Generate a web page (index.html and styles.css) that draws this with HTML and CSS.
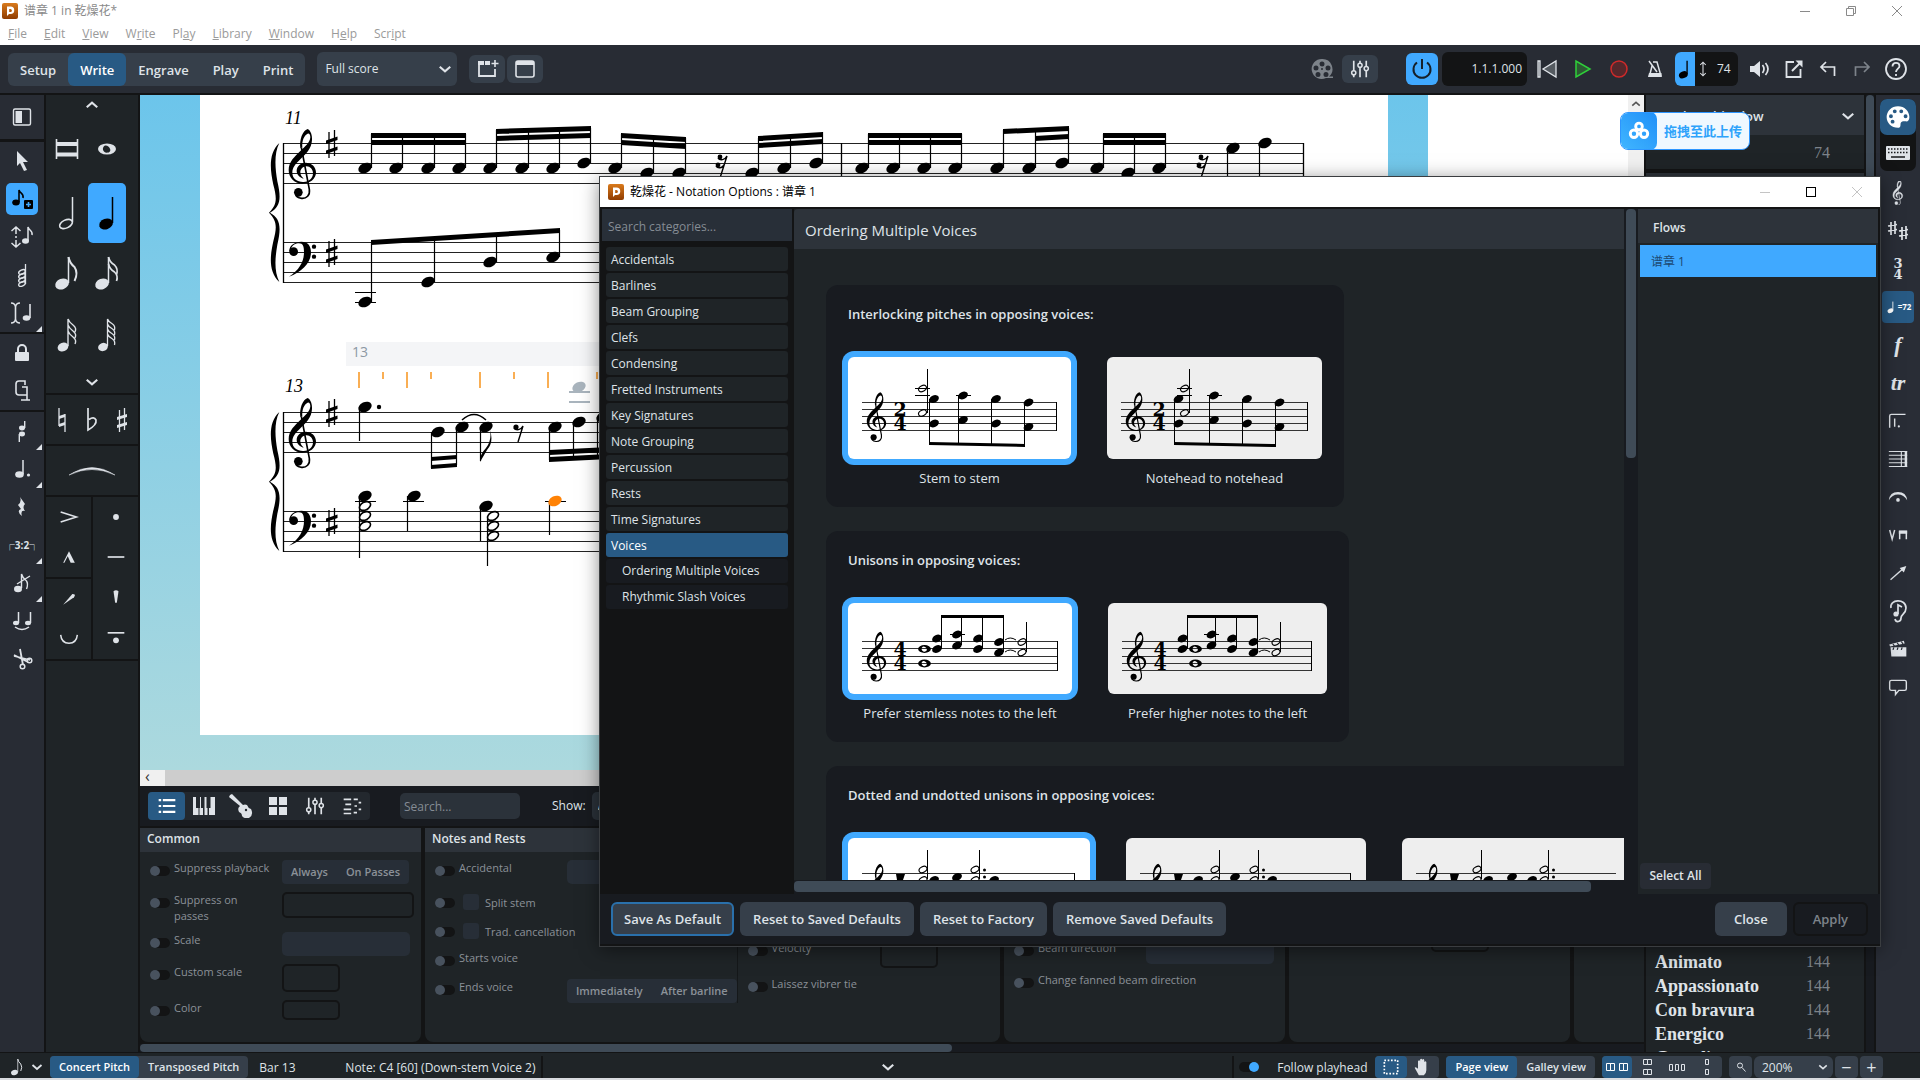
FILE: index.html
```html
<!DOCTYPE html>
<html lang="en">
<head>
    <meta charset="UTF-8">
    <meta name="viewport" content="width=device-width, initial-scale=1.0">
    <title>谱章 1 in 乾燥花*</title>
    <link rel="stylesheet" href="styles.css">
</head>
<body>
    <svg class="sprite" aria-hidden="true">
        <defs>
            <linearGradient id="orange" x1="0" y1="0" x2="0" y2="1"><stop offset="0" stop-color="#d97a1c"/><stop offset="1" stop-color="#8f3c00"/></linearGradient>
            <!-- notation glyphs, staff space = 10 -->
            <g id="head"><ellipse rx="7" ry="4.9" transform="rotate(-25)"/></g>
            <g id="open"><ellipse rx="5.9" ry="3.9" transform="rotate(-28)" fill="none" stroke="currentColor" stroke-width="1.6"/></g>
            <g id="whole"><path fill-rule="evenodd" d="M-9 0a9 5.5 0 0 1 18 0a9 5.5 0 0 1-18 0zM-3.5-2c-1.500 2 0 5.500 3 5.700c3 .2 4.500-1.500 3.500-3.900c-1-3-5-4.500-6.500-1.800z"/></g>
            <g id="sharp"><path d="M3 1v26M8.500-1v26" stroke="currentColor" stroke-width="1.300"/><path d="M0 9.500l11.500-4v3.500l-11.500 4zM0 19.500l11.500-4v3.500l-11.500 4z"/></g>
            <g id="gclef">
                <g transform="scale(.3333) translate(-118 -249)">
                    <path d="M174 117C184 122 188 138 187 150C186 176 168 192 152 208C138 222 128 232 128 248C128 266 142 275 160 276C178 277 190 264 190 250C190 238 181 229 171 229C160 229 152 237 152 247C152 256 157 261 162 266C150 263 141 254 141 243C141 229 152 218 168 218C186 218 199 231 199 247C199 267 181 281 158 281C133 281 117 262 117 240C117 215 136 199 152 183C166 170 181 158 182 142C182 134 179 130 174 131C164 135 156 152 158 172L152 174C149 150 158 122 174 117Z"/>
                    <path d="M155 172L179 298C182 316 170 326 156 325C148 325 142 321 138 316" fill="none" stroke="currentColor" stroke-width="5"/>
                    <circle cx="146" cy="307" r="13"/>
                </g>
            </g>
            <g id="fclef">
                <g transform="scale(.3333) translate(-118 -487)">
                    <path d="M119 486C117 468 135 456 155 456C176 456 184 470 184 488C184 520 155 548 118 561C150 540 163 515 163 487C163 470 160 461 148 461C138 461 128 466 124 478Z"/>
                    <circle cx="132" cy="486" r="13"/><circle cx="193" cy="471" r="6.500"/><circle cx="193" cy="501" r="6.500"/>
                </g>
            </g>
            <g id="brace"><path transform="scale(.3333) translate(-57 -160)" d="M88 160C55 190 60 240 70 285C82 330 80 345 57 369C80 393 82 410 70 455C60 500 55 545 88 577C72 545 75 505 82 465C95 410 90 385 60 369C90 352 95 330 82 275C75 235 72 190 88 160Z"/></g>
            <g id="rest8"><circle cx="-3" cy="-5" r="2.600"/><path d="M-5-4c2 3 7 2 9-2l-5 16" fill="none" stroke="currentColor" stroke-width="1.400"/></g>
            <g id="rest16"><circle cx="-2" cy="-5" r="2.400"/><circle cx="-4" cy="3" r="2.400"/><path d="M-4-4c2 3 7 2 9-2l-7 22M-6 4c2 3 6 2 8-1" fill="none" stroke="currentColor" stroke-width="1.400"/></g>
            <g id="sclef"><use href="#gclef" transform="scale(.71)"/></g>
            <g id="shead"><use href="#head" transform="scale(.73)"/></g>
            <g id="sopen"><use href="#open" transform="scale(.71)"/></g>
            <g id="swhole"><use href="#whole" transform="scale(.71)"/></g>
        </defs>
        <symbol id="i-logo" viewBox="0 0 16 16"><rect width="16" height="16" rx="2" fill="url(#orange)"/><path d="M5 3.500h3.500a3.700 3.700 0 0 1 0 7.500H7l-2 2zM7.200 6v3h1.200a1.400 1.400 0 0 0 0-3z" fill="#fff" fill-rule="evenodd"/></symbol>
        <symbol id="i-down" viewBox="0 0 12 12"><path d="M1.500 4L6 8l4.500-4" fill="none" stroke="currentColor" stroke-width="1.800"/></symbol>
        <symbol id="i-up" viewBox="0 0 12 12"><path d="M1.500 8L6 4l4.500 4" fill="none" stroke="currentColor" stroke-width="1.800"/></symbol>
        <symbol id="i-newtab" viewBox="0 0 24 24"><path d="M4 6v13h16v-7" fill="none" stroke="currentColor" stroke-width="1.800"/><path d="M3 4h6v4H3zM10 4h5v4h-5z"/><path d="M20 3v7M16.500 6.500h7" stroke="currentColor" stroke-width="1.600"/></symbol>
        <symbol id="i-window" viewBox="0 0 24 24"><rect x="3" y="4" width="18" height="16" rx="2" fill="none" stroke="currentColor" stroke-width="1.600"/><path d="M3 4h18v4H3z"/></symbol>
        <symbol id="i-reel" viewBox="0 0 24 24"><path fill-rule="evenodd" d="M12 2a10 10 0 1 0 4 19h7v-1.500h-4A10 10 0 0 0 12 2zm0 2.500a2.500 2.500 0 1 1 0 5a2.500 2.500 0 0 1 0-5zm-6 4a2.500 2.500 0 1 1 0 5a2.500 2.500 0 0 1 0-5zm12 0a2.500 2.500 0 1 1 0 5a2.500 2.500 0 0 1 0-5zm-6 2.500a1 1 0 1 1 0 2a1 1 0 0 1 0-2zm-4 4a2.500 2.500 0 1 1 0 5a2.500 2.500 0 0 1 0-5zm8 0a2.500 2.500 0 1 1 0 5a2.500 2.500 0 0 1 0-5z"/></symbol>
        <symbol id="i-mixer" viewBox="0 0 24 24"><path d="M4.500 2v12M4.500 19v3M12 2v3M12 10v12M19.500 2v7M19.500 14v8" stroke="currentColor" stroke-width="2"/><g fill="none" stroke="currentColor" stroke-width="1.800"><circle cx="4.500" cy="16.500" r="2.500"/><circle cx="12" cy="7.500" r="2.500"/><circle cx="19.500" cy="11.500" r="2.500"/></g></symbol>
        <symbol id="i-power" viewBox="0 0 24 24"><path d="M7 5.500a8.500 8.500 0 1 0 10 0M12 2v10" fill="none" stroke="currentColor" stroke-width="2"/></symbol>
        <symbol id="i-rewind" viewBox="0 0 24 24"><path d="M3 4h2v16H3zM21 4v16L8 12z" fill="#555b61" stroke="currentColor" stroke-width="1.300"/></symbol>
        <symbol id="i-play" viewBox="0 0 24 24"><path d="M5 4v16l14-8z" fill="#2d5a33" stroke="#2fd03a" stroke-width="1.500"/></symbol>
        <symbol id="i-rec" viewBox="0 0 24 24"><circle cx="12" cy="12" r="8" fill="#55282c" stroke="#d02a2a" stroke-width="1.500"/></symbol>
        <symbol id="i-metro" viewBox="0 0 24 24"><path d="M10 5h4l4 14H6.500L9 9M6 4l8 11" fill="none" stroke="currentColor" stroke-width="1.500"/><path d="M6 16h12.500v4H5z"/></symbol>
        <symbol id="i-tempo" viewBox="0 0 24 34"><ellipse cx="10" cy="24" rx="5.500" ry="4" transform="rotate(-25 10 24)"/><path d="M14.500 7v16" stroke="currentColor" stroke-width="1.600"/></symbol>
        <symbol id="i-updown" viewBox="0 0 10 20"><path d="M5 2v16M1.500 5L5 1.500 8.500 5M1.500 15L5 18.500 8.500 15" fill="none" stroke="currentColor" stroke-width="1.300"/></symbol>
        <symbol id="i-speaker" viewBox="0 0 24 24"><path d="M2 9h4l6-5v16l-6-5H2z"/><path d="M14.500 8q3 4 0 8M17.500 6q5 6 0 12" fill="none" stroke="currentColor" stroke-width="1.700"/></symbol>
        <symbol id="i-popout" viewBox="0 0 24 24"><path d="M12 5H4.500v15h14v-8" fill="none" stroke="currentColor" stroke-width="1.800"/><path d="M10 14l8-8" stroke="currentColor" stroke-width="2"/><path d="M13.500 3.500h7v7z"/></symbol>
        <symbol id="i-undo" viewBox="0 0 24 24"><path d="M10 5L5 10l5 5M5 10h13.500v9" fill="none" stroke="currentColor" stroke-width="1.700"/></symbol>
        <symbol id="i-redo" viewBox="0 0 24 24"><path d="M14 5l5 5-5 5M19 10H5.500v9" fill="none" stroke="currentColor" stroke-width="1.700"/></symbol>
        <symbol id="i-help" viewBox="0 0 24 24"><circle cx="12" cy="12" r="10" fill="none" stroke="currentColor" stroke-width="1.800"/><path d="M8.500 9.500c0-5 7-4.500 7-.5c0 2.500-3.500 3-3.500 6M12 17v2" fill="none" stroke="currentColor" stroke-width="1.800"/></symbol>
        <symbol id="i-panel" viewBox="0 0 24 24"><rect x="3.500" y="4" width="17" height="16" rx="1.500" fill="none" stroke="currentColor" stroke-width="1.400"/><path d="M5.500 6H12v12H5.500z"/></symbol>
        <symbol id="i-arrow" viewBox="0 0 24 24"><path d="M7 2v15l3-3 4 8 3-1-4-8h5z"/></symbol>
        <symbol id="i-noteadd" viewBox="0 0 24 24"><ellipse cx="6" cy="15.500" rx="3.800" ry="3"/><path d="M9 15V3c1 4 5 3 4 8" fill="none" stroke="currentColor" stroke-width="1.600"/><rect x="14" y="13" width="9" height="9" rx="1"/><path d="M18.500 15v5M16 17.500h5" stroke="#40a9ff" stroke-width="1.600"/></symbol>
        <symbol id="i-notemove" viewBox="0 0 24 24"><path d="M6 2v7M6 15v7M6 11v2M1.500 6L6 2l4.500 4M1.500 18L6 22l4.500-4M18 16V2c1 4 5 3 4 8" fill="none" stroke="currentColor" stroke-width="1.500"/><ellipse cx="15.500" cy="16" rx="3.500" ry="2.700"/></symbol>
        <symbol id="i-cluster" viewBox="0 0 24 24"><path d="M15.500 1v20" stroke="currentColor" stroke-width="1.300"/><g fill="none" stroke="currentColor" stroke-width="1.400"><ellipse cx="12" cy="9" rx="3.500" ry="2" transform="rotate(-25 12 9)"/><ellipse cx="12" cy="13" rx="3.500" ry="2" transform="rotate(-25 12 13)"/><ellipse cx="12" cy="17" rx="3.500" ry="2" transform="rotate(-25 12 17)"/><ellipse cx="12" cy="21" rx="3.500" ry="2" transform="rotate(-25 12 21)"/></g></symbol>
        <symbol id="i-caret" viewBox="0 0 24 24"><path d="M1 2q4 0 4.500 4v12q-.5 4-4.500 4M10 2q-4 0-4.500 4v12q.5 4 4.500 4M20 17V3" fill="none" stroke="currentColor" stroke-width="1.600"/><ellipse cx="16.500" cy="17" rx="3.800" ry="2.800"/></symbol>
        <symbol id="i-lock" viewBox="0 0 24 24"><rect x="5" y="11" width="14" height="9" rx="1"/><path d="M8 12V8a4 4 0 0 1 8 0v4" fill="none" stroke="currentColor" stroke-width="2"/></symbol>
        <symbol id="i-force" viewBox="0 0 24 24"><path d="M15 6V2H9q-3 0-3 3v8q0 3 3 3h8M12 8h5v13M11 21h9" fill="none" stroke="currentColor" stroke-width="1.600"/></symbol>
        <symbol id="i-voices" viewBox="0 0 24 24"><ellipse cx="12" cy="9" rx="3" ry="2.400"/><ellipse cx="12" cy="15" rx="3" ry="2.400"/><path d="M14.700 9V2M9.300 15v8" stroke="currentColor" stroke-width="1.400"/></symbol>
        <symbol id="i-dotted" viewBox="0 0 24 24"><ellipse cx="9.500" cy="17.500" rx="4.300" ry="3.200"/><path d="M13 17V3" stroke="currentColor" stroke-width="1.500"/><circle cx="18.500" cy="18" r="1.600"/></symbol>
        <symbol id="i-rest" viewBox="0 0 24 24"><path d="M10 2l5 7q-3 3 0 7q-5-1-3 5q-6-5-1-7L8 10q4-3 2-8z"/></symbol>
        <symbol id="i-grace" viewBox="0 0 24 24"><ellipse cx="8" cy="18" rx="4" ry="3.200"/><path d="M11.500 17V3q1 4 5 7q2 3 0 8M7 13L20 5" fill="none" stroke="currentColor" stroke-width="1.400"/></symbol>
        <symbol id="i-tie" viewBox="0 0 24 24"><ellipse cx="6" cy="14" rx="3" ry="2.200"/><ellipse cx="18" cy="14" rx="3" ry="2.200"/><path d="M8.500 14V3M20.500 14V3M5 18q7 5 14 0" fill="none" stroke="currentColor" stroke-width="1.500"/></symbol>
        <symbol id="i-cut" viewBox="0 0 24 24"><path d="M4 8l14 7M10 2l3 16M4 9l16 4" stroke="currentColor" stroke-width="1.800"/><circle cx="19.500" cy="13.500" r="2.300" fill="none" stroke="currentColor" stroke-width="1.500"/><circle cx="12.500" cy="19.500" r="2.300" fill="none" stroke="currentColor" stroke-width="1.500"/></symbol>
        <symbol id="i-breve" viewBox="0 0 24 24"><path d="M1.500 2v20M22.500 2v20" stroke="currentColor" stroke-width="1.600"/><path d="M2 5h20v4H2zM2 15.500h20v4H2z"/></symbol>
        <symbol id="i-whole" viewBox="0 0 24 24"><use href="#whole" x="12" y="12"/></symbol>
        <symbol id="n-half" viewBox="0 0 30 40"><ellipse cx="14" cy="31" rx="6.800" ry="4" transform="rotate(-25 14 31)" fill="none" stroke="currentColor" stroke-width="1.600"/><path d="M20.500 29V4" stroke="currentColor" stroke-width="1.500"/></symbol>
        <symbol id="n-quarter" viewBox="0 0 30 40"><ellipse cx="14" cy="31" rx="7" ry="5.200" transform="rotate(-20 14 31)"/><path d="M20.500 30V4" stroke="currentColor" stroke-width="1.500"/></symbol>
        <symbol id="n-8" viewBox="0 0 30 40"><use href="#n-quarter" x="-4" width="30" height="40"/><path d="M16.500 4q1 6 6 10q4 6 0 14" fill="none" stroke="currentColor" stroke-width="2"/></symbol>
        <symbol id="n-16" viewBox="0 0 30 40"><use href="#n-quarter" x="-4" width="30" height="40"/><path d="M16.500 4q1 5 6 8q4 4 2 10M16.500 11q1 5 6 8q4 4 2 9" fill="none" stroke="currentColor" stroke-width="1.700"/></symbol>
        <symbol id="n-32" viewBox="0 0 30 40"><ellipse cx="11" cy="32" rx="5.500" ry="4.300" transform="rotate(-20 11 32)"/><path d="M16 31V4q1 3 5 6q4 3 2 7M16 10q1 3 5 6q4 3 2 7M16 16q1 3 5 6q4 3 2 7" fill="none" stroke="currentColor" stroke-width="1.400"/></symbol>
        <symbol id="n-64" viewBox="0 0 30 40"><ellipse cx="11" cy="32" rx="5" ry="4" transform="rotate(-20 11 32)"/><path d="M15.500 31V4q1 3 5 5q3 2 2 6M15.500 9q1 3 5 5q3 2 2 6M15.500 14q1 3 5 5q3 2 2 6M15.500 19q1 3 5 5q3 2 2 6" fill="none" stroke="currentColor" stroke-width="1.300"/></symbol>
        <symbol id="i-natural" viewBox="0 0 24 24"><path d="M9 0v18M15 6v18" stroke="currentColor" stroke-width="1.300"/><path d="M9 8l6-2v3l-6 2zM9 16l6-2v3l-6 2z"/></symbol>
        <symbol id="i-flat" viewBox="0 0 24 24"><path d="M8 0v22q9-5 8-10q-2-4-7-.5" fill="none" stroke="currentColor" stroke-width="1.700"/></symbol>
        <symbol id="i-sharp" viewBox="0 0 24 24"><path d="M9.500 2v22M14.500 0v22" stroke="currentColor" stroke-width="1.300"/><path d="M7 9l10-3v3L7 12zM7 17l10-3v3L7 20z"/></symbol>
        <symbol id="i-slur" viewBox="0 0 48 12"><path d="M1 10Q24-5 47 10Q24-1 1 10z" stroke="currentColor" stroke-width=".5"/></symbol>
        <symbol id="i-accent" viewBox="0 0 24 24"><path d="M2 6l19 6-19 6" fill="none" stroke="currentColor" stroke-width="2"/></symbol>
        <symbol id="i-marcato" viewBox="0 0 24 24"><path d="M5 19l7-14 7 14h-5l-3.500-8L6.500 19z"/></symbol>
        <symbol id="i-stress" viewBox="0 0 24 24"><path d="M5 19L16 6q5 0 2 4z"/></symbol>
        <symbol id="i-unstress" viewBox="0 0 24 24"><path d="M2 7q1 10 10 10t10-10" fill="none" stroke="currentColor" stroke-width="1.800"/></symbol>
        <symbol id="i-staccato" viewBox="0 0 24 24"><circle cx="12" cy="12" r="3.500"/></symbol>
        <symbol id="i-tenuto" viewBox="0 0 24 24"><path d="M2 12h20" stroke="currentColor" stroke-width="2"/></symbol>
        <symbol id="i-wedge" viewBox="0 0 24 24"><path d="M9 5q3-2 6 0l-2 14h-2z"/></symbol>
        <symbol id="i-loure" viewBox="0 0 24 24"><path d="M2 7h20" stroke="currentColor" stroke-width="2"/><circle cx="12" cy="16" r="3.500"/></symbol>
        <symbol id="i-palette" viewBox="0 0 24 24"><path fill-rule="evenodd" d="M12 2C6 2 1.500 6.500 1.500 12S6 22 12 22c3 0 2-3 2.500-4.500S17 15.500 19 16s3.500-1 3.500-4C22.500 6.500 18 2 12 2zM9 5a1.800 1.800 0 1 1 0 3.600A1.800 1.800 0 0 1 9 5zm6 0a1.800 1.800 0 1 1 0 3.600A1.800 1.800 0 0 1 15 5zM5.500 9.500a1.800 1.800 0 1 1 0 3.600a1.800 1.800 0 0 1 0-3.600zm1.500 5a1.800 1.800 0 1 1 0 3.600A1.800 1.800 0 0 1 7 14.500zm12-5a1.800 1.800 0 1 1 0 3.600a1.800 1.800 0 0 1 0-3.600z"/></symbol>
        <symbol id="i-keyboard" viewBox="0 0 26 24"><rect x="1" y="5" width="24" height="14" rx="1"/><path d="M3 8h20M3 11.500h20" stroke="#17191b" stroke-width="1.500" stroke-dasharray="1.500 1.500"/><path d="M6 16h14" stroke="#17191b" stroke-width="1.500"/></symbol>
        <symbol id="i-gclef" viewBox="0 0 24 24"><use href="#gclef" transform="translate(7 15) scale(.36)" stroke="currentColor" stroke-width="3"/></symbol>
        <symbol id="i-keys" viewBox="0 0 24 24"><path d="M5 3v13M9 2v13M2 7l9-1.500M2 12l9-1.500M16 8v13M20 7v13M13 12l9-1.500M13 17l9-1.500" stroke="currentColor" stroke-width="1.700"/></symbol>
        <symbol id="i-pedal" viewBox="0 0 24 24"><path d="M2 20V6q0-2 2-2h17M8 9v10" fill="none" stroke="currentColor" stroke-width="1.700"/><circle cx="13" cy="18.500" r="1.300"/></symbol>
        <symbol id="i-bars" viewBox="0 0 24 24"><path d="M1 3h22M1 7.500h22M1 12h22M1 16.500h22M1 21h22M16 3v18" stroke="currentColor" stroke-width="1.300"/><path d="M20 2.500h3v19h-3z"/></symbol>
        <symbol id="i-fermata" viewBox="0 0 24 24"><path d="M1 16Q2 6 12 6t11 10Q19 9 12 9T1 16z"/><circle cx="12" cy="15.500" r="2.200"/></symbol>
        <symbol id="i-bow" viewBox="0 0 24 24"><path d="M2 6l3 11 3-11M14 17V8h8v9" fill="none" stroke="currentColor" stroke-width="1.800"/><path d="M13 6.500h10v4H13z"/></symbol>
        <symbol id="i-line" viewBox="0 0 24 24"><path d="M3 20L18 7" stroke="currentColor" stroke-width="1.700"/><path d="M22 3.500l-3 8-5-5.500z"/></symbol>
        <symbol id="i-ear" viewBox="0 0 24 24"><path d="M5 9C3 0 20-1 20 9c0 6-5 6-5 10s-5 5-6 1M12 15V6l4 2" fill="none" stroke="currentColor" stroke-width="1.700"/><circle cx="10" cy="15" r="2.600"/></symbol>
        <symbol id="i-clap" viewBox="0 0 24 24"><path d="M3 10h19v11H4zM1.500 6.500L19 2l1 3.500L2.500 9z"/><path d="M6 6l2 3M11 4.500l2 3M16 3l2 3M7 10l-1 3M12 10l-1 3M17 10l-1 3" stroke="#292d36" stroke-width="1.500"/></symbol>
        <symbol id="i-comment" viewBox="0 0 24 24"><path d="M4 4h16q2 0 2 2v8q0 2-2 2h-7l-4 5v-5H4q-2 0-2-2V6q0-2 2-2z" fill="none" stroke="currentColor" stroke-width="1.700"/></symbol>
        <symbol id="i-list" viewBox="0 0 24 24"><path d="M7 5h15M7 12h15M7 19h15M2 5h3M2 12h3M2 19h3" stroke="currentColor" stroke-width="2.600"/></symbol>
        <symbol id="i-piano" viewBox="0 0 24 24"><path d="M1 3h3v11h2.500v7H1zM8 3h1v11h2v7H7.500v-7H8zM12.500 3h2v11h1v7h-3zM18.500 3H23v18h-6v-7h1.500z"/></symbol>
        <symbol id="i-guitar" viewBox="0 0 24 24"><path d="M1 1l2-1 11 11q2-1 4 0 1 3 4 4 3 6-2 9-5 1-7-2 0-3-3-4-2-4 1-6L0 3z"/><circle cx="17" cy="16" r="1.200" fill="#23282e"/></symbol>
        <symbol id="i-pads" viewBox="0 0 24 24"><path d="M3 3h8v8H3zM13 3h8v8h-8zM3 13h8v8H3zM13 13h8v8h-8z"/></symbol>
        <symbol id="i-roll" viewBox="0 0 24 24"><path d="M2 4h9M4 10h7M2 16h9M2 21h9M14 4h5M20 8h3M15 12h3M20 16h3M14 20h4" stroke="currentColor" stroke-width="2"/></symbol>
        <symbol id="i-marquee" viewBox="0 0 24 24"><rect x="4" y="4" width="16" height="16" fill="none" stroke="currentColor" stroke-width="2" stroke-dasharray="2 2"/></symbol>
        <symbol id="i-hand" viewBox="0 0 24 24"><path d="M7 22L2 13q1-2 4 1V5q1.500-2 2.500 0v6V3q1.500-2 2.500 0v8V3.500q1.500-2 2.500 0V11V6q1.500-2 2.500 0v10q0 4-3 6z"/></symbol>
        <symbol id="i-search" viewBox="0 0 24 24"><circle cx="10" cy="9" r="5" fill="none" stroke="currentColor" stroke-width="2"/><path d="M14 13l7 8" stroke="currentColor" stroke-width="2"/></symbol>
        <symbol id="i-cloud" viewBox="0 0 24 24"><g fill="none" stroke="#fff" stroke-width="3.200"><circle cx="12" cy="7" r="3.600"/><circle cx="6.500" cy="15" r="4"/><circle cx="17.500" cy="15" r="4"/></g></symbol>
        <!-- page arrangement icons in the status bar -->
        <symbol id="i-spreads-h" viewBox="0 0 24 20"><path d="M1.500 6.500h4v7h-4zM5.500 6.500h4v7h-4zM14.500 6.500h4v7h-4zM18.500 6.500h4v7h-4z" fill="none" stroke="currentColor"/></symbol>
        <symbol id="i-spreads-v" viewBox="0 0 24 20"><path d="M8.500 2.500h4v5h-4zM12.500 2.500h4v5h-4zM8.500 12.500h4v5h-4zM12.500 12.500h4v5h-4z" fill="none" stroke="currentColor"/></symbol>
        <symbol id="i-pages-h" viewBox="0 0 24 20"><path d="M4.500 7.500h3v6h-3zM10.500 7.500h3v6h-3zM16.500 7.500h3v6h-3z" fill="none" stroke="currentColor"/></symbol>
        <symbol id="i-pages-v" viewBox="0 0 24 20"><path d="M10.500 2.500h3v5h-3zM10.500 12.500h3v5h-3z" fill="none" stroke="currentColor"/></symbol>
        <symbol id="i-min" viewBox="0 0 12 12"><path d="M1 6.500h10" stroke="currentColor"/></symbol>
        <symbol id="i-restore" viewBox="0 0 12 12"><path d="M1.500 3.500h7v7h-7zM3.500 3.500v-2h7v7h-2" fill="none" stroke="currentColor"/></symbol>
        <symbol id="i-max" viewBox="0 0 12 12"><rect x="1.500" y="1.500" width="9" height="9" fill="none" stroke="currentColor"/></symbol>
        <symbol id="i-close" viewBox="0 0 12 12"><path d="M1 1l10 10M11 1L1 11" stroke="currentColor"/></symbol>
    </svg>

    <header class="titlebar">
        <svg class="logo"><use href="#i-logo"/></svg>
        <span>谱章 1 in 乾燥花*</span>
        <div class="window-controls">
            <button aria-label="Minimize"><svg><use href="#i-min"/></svg></button>
            <button aria-label="Restore"><svg><use href="#i-restore"/></svg></button>
            <button aria-label="Close window"><svg><use href="#i-close"/></svg></button>
        </div>
    </header>
    <nav class="menubar">
        <a href="#"><u>F</u>ile</a><a href="#"><u>E</u>dit</a><a href="#"><u>V</u>iew</a><a href="#">W<u>r</u>ite</a><a href="#">Pl<u>a</u>y</a><a href="#"><u>L</u>ibrary</a><a href="#"><u>W</u>indow</a><a href="#">H<u>e</u>lp</a><a href="#">Scr<u>i</u>pt</a>
    </nav>

    <div class="toolbar">
        <div class="modes">
            <button>Setup</button><button class="active">Write</button><button>Engrave</button><button>Play</button><button>Print</button>
        </div>
        <div class="select layout-select">
            <select aria-label="Layout"><option>Full score</option></select>
            <svg><use href="#i-down"/></svg>
        </div>
        <div class="tab-buttons">
            <button class="square" aria-label="New tab"><svg class="icon"><use href="#i-newtab"/></svg></button>
            <button class="square" aria-label="Tabs"><svg class="icon"><use href="#i-window"/></svg></button>
        </div>
        <div class="transport">
            <button class="cell wide dim" aria-label="Video"><svg class="icon"><use href="#i-reel"/></svg></button>
            <button class="square mixer" aria-label="Mixer"><svg class="icon small"><use href="#i-mixer"/></svg></button>
            <button class="power" aria-label="Activate project"><svg class="icon"><use href="#i-power"/></svg></button>
            <div class="position">1.1.1.000</div>
            <button class="cell wide" aria-label="Rewind"><svg class="icon"><use href="#i-rewind"/></svg></button>
            <button class="cell wide" aria-label="Play back"><svg class="icon"><use href="#i-play"/></svg></button>
            <button class="cell wide" aria-label="Record"><svg class="icon"><use href="#i-rec"/></svg></button>
            <button class="cell wide" aria-label="Click"><svg class="icon"><use href="#i-metro"/></svg></button>
            <div class="tempo"><svg class="tempo-note"><use href="#i-tempo"/></svg><svg class="tempo-arrows"><use href="#i-updown"/></svg><span>74</span></div>
            <button class="cell" aria-label="Volume"><svg class="icon"><use href="#i-speaker"/></svg></button>
            <button class="cell" aria-label="Pop out"><svg class="icon"><use href="#i-popout"/></svg></button>
            <button class="cell" aria-label="Undo"><svg class="icon"><use href="#i-undo"/></svg></button>
            <button class="cell dim" aria-label="Redo"><svg class="icon"><use href="#i-redo"/></svg></button>
            <button class="cell" aria-label="Help"><svg class="icon"><use href="#i-help"/></svg></button>
        </div>
    </div>

    <div class="workspace">
        <aside class="toolbox">
            <div class="tools tall"><button aria-label="Panel"><svg class="icon"><use href="#i-panel"/></svg></button></div>
            <div class="tools">
                <button aria-label="Select"><svg class="icon"><use href="#i-arrow"/></svg></button>
                <button class="on" aria-label="Insert notes"><svg class="icon"><use href="#i-noteadd"/></svg></button>
                <button aria-label="Pitch before duration"><svg class="icon"><use href="#i-notemove"/></svg></button>
                <button aria-label="Chords"><svg class="icon"><use href="#i-cluster"/></svg></button>
                <button class="more" aria-label="Insert"><svg class="icon"><use href="#i-caret"/></svg></button>
            </div>
            <div class="tools">
                <button aria-label="Lock"><svg class="icon"><use href="#i-lock"/></svg></button>
                <button aria-label="Force duration"><svg class="icon"><use href="#i-force"/></svg></button>
            </div>
            <div class="tools grow">
                <button class="more" aria-label="Voices"><svg class="icon"><use href="#i-voices"/></svg></button>
                <button class="more" aria-label="Rhythm dot"><svg class="icon"><use href="#i-dotted"/></svg></button>
                <button aria-label="Rests"><svg class="icon"><use href="#i-rest"/></svg></button>
                <button class="more tuplet">┌3:2┐</button>
                <button class="more" aria-label="Grace notes"><svg class="icon"><use href="#i-grace"/></svg></button>
                <button aria-label="Tie"><svg class="icon"><use href="#i-tie"/></svg></button>
                <button aria-label="Scissors"><svg class="icon"><use href="#i-cut"/></svg></button>
            </div>
        </aside>

        <aside class="notes-panel">
            <div class="durations">
                <button class="wide" aria-label="Shorter"><svg class="chev"><use href="#i-up"/></svg></button>
                <button aria-label="Double whole"><svg class="icon"><use href="#i-breve"/></svg></button>
                <button aria-label="Whole"><svg class="icon"><use href="#i-whole"/></svg></button>
                <button aria-label="Half"><svg class="note"><use href="#n-half"/></svg></button>
                <button class="on" aria-label="Quarter"><svg class="note"><use href="#n-quarter"/></svg></button>
                <button aria-label="Eighth"><svg class="note"><use href="#n-8"/></svg></button>
                <button aria-label="16th"><svg class="note"><use href="#n-16"/></svg></button>
                <button aria-label="32nd"><svg class="note"><use href="#n-32"/></svg></button>
                <button aria-label="64th"><svg class="note"><use href="#n-64"/></svg></button>
                <button class="wide last" aria-label="Longer"><svg class="chev"><use href="#i-down"/></svg></button>
            </div>
            <div class="accidentals">
                <button aria-label="Natural"><svg class="icon"><use href="#i-natural"/></svg></button>
                <button aria-label="Flat"><svg class="icon"><use href="#i-flat"/></svg></button>
                <button aria-label="Sharp"><svg class="icon"><use href="#i-sharp"/></svg></button>
            </div>
            <div class="slur"><button aria-label="Slur"><svg><use href="#i-slur"/></svg></button></div>
            <div class="artics">
                <div class="artic-left">
                    <div><button aria-label="Accent"><svg class="icon small"><use href="#i-accent"/></svg></button><button aria-label="Marcato"><svg class="icon small"><use href="#i-marcato"/></svg></button></div>
                    <div><button aria-label="Stress"><svg class="icon small"><use href="#i-stress"/></svg></button><button aria-label="Unstress"><svg class="icon small"><use href="#i-unstress"/></svg></button></div>
                </div>
                <div class="artic-right">
                    <button aria-label="Staccato"><svg class="icon small"><use href="#i-staccato"/></svg></button>
                    <button aria-label="Tenuto"><svg class="icon small"><use href="#i-tenuto"/></svg></button>
                    <button aria-label="Staccatissimo"><svg class="icon small"><use href="#i-wedge"/></svg></button>
                    <button aria-label="Loure"><svg class="icon small"><use href="#i-loure"/></svg></button>
                </div>
            </div>
            <div class="panel-rest"></div>
        </aside>

        <main class="center">
            <div class="canvas">
                <div class="page">
                    <svg class="score" viewBox="200 95 1188 640" preserveAspectRatio="xMinYMin slice">
                        <path d="M346 342h400v24H346z" fill="#f4f5f7"/>
                        <text x="352" y="357" class="ruler">13</text>
                        <path d="M359 372v16M407 372v16M480 372v16M548 372v16M383 372v7M431 372v7M514 372v7M597 372v7" stroke="#f7941d" stroke-width="1.500"/>
                        <text x="285" y="124" class="barno">11</text>
                        <text x="285" y="392" class="barno">13</text>
                        <!-- staves -->
                        <path d="M283 143.500H1304M283 153.500H1304M283 163.500H1304M283 173.500H1304M283 183.500H1304M283 242.500H1304M283 252.500H1304M283 262.500H1304M283 272.500H1304M283 282.500H1304M283 412.500H1304M283 422.500H1304M283 432.500H1304M283 442.500H1304M283 452.500H1304M283 511.500H1304M283 521.500H1304M283 531.500H1304M283 541.500H1304M283 551.500H1304" stroke="#222" stroke-width="1"/>
                        <path d="M283.500 143v140M841.500 143v140M1303.500 143v140M283.500 412v140M1303.500 412v140" stroke="#000" stroke-width="1.300"/>
                        <use href="#brace" x="269" y="143"/><use href="#brace" x="269" y="412"/>
                        <use href="#gclef" x="289" y="173"/><use href="#gclef" x="289" y="442"/>
                        <use href="#fclef" x="289" y="252"/><use href="#fclef" x="289" y="521"/>
                        <use href="#sharp" x="326" y="131"/><use href="#sharp" x="326" y="240"/><use href="#sharp" x="326" y="400"/><use href="#sharp" x="326" y="509"/>
                        <!-- bar 11 treble -->
                        <use href="#head" x="365" y="168"/><use href="#head" x="396" y="168"/><use href="#head" x="428" y="168"/><use href="#head" x="459" y="168"/>
                        <use href="#head" x="490" y="168"/><use href="#head" x="522" y="168"/><use href="#head" x="553" y="168"/><use href="#head" x="584" y="163"/>
                        <use href="#head" x="615" y="168"/><use href="#head" x="647" y="173"/><use href="#head" x="679" y="173"/><use href="#rest16" x="722" y="162"/>
                        <use href="#head" x="752" y="173"/><use href="#head" x="784" y="168"/><use href="#head" x="816" y="163"/>
                        <path d="M371.500 168V134M402.500 168V134M434.500 168V134M465.500 168V134M496.500 168V130M528.500 168V130M559.500 168V130M590.500 163V128M621.500 168V134M653.500 173V136M685.500 173V138M758.500 173V138M790.500 168V135M822.500 163V132" stroke="#000" stroke-width="1.200"/>
                        <path d="M371 133h95v5h-95zM371 140h95v5h-95zM496 129l95-3v5l-95 3zM496 136l95-3v5l-95 3zM621 133l65 4v5l-65-4zM621 140l65 4v5l-65-4zM758 136l65-4v5l-65 4zM758 143l65-4v5l-65 4z"/>
                        <!-- bar 12 treble -->
                        <use href="#head" x="862" y="168"/><use href="#head" x="893" y="168"/><use href="#head" x="924" y="168"/><use href="#head" x="955" y="168"/>
                        <use href="#head" x="997" y="168"/><use href="#head" x="1029" y="168"/><use href="#head" x="1062" y="163"/>
                        <use href="#head" x="1097" y="168"/><use href="#head" x="1128" y="173"/><use href="#head" x="1159" y="168"/><use href="#rest16" x="1203" y="162"/>
                        <use href="#head" x="1233" y="148"/><use href="#head" x="1265" y="143"/>
                        <path d="M868.500 168V134M899.500 168V134M930.500 168V134M961.500 168V134M1003.500 168V130M1035.500 168V130M1068.500 163V128M1103.500 168V134M1134.500 173V134M1165.500 168V134M1227.500 148v35M1259.500 143v35" stroke="#000" stroke-width="1.200"/>
                        <path d="M868 133h94v5h-94zM868 140h94v5h-94zM1003 129l66-3v5l-66 3zM1035 136l34-2v5l-34 2zM1103 133h63v5h-63zM1103 140h63v5h-63z"/>
                        <!-- bar 11 bass -->
                        <use href="#head" x="365" y="302"/><use href="#head" x="428" y="282"/><use href="#head" x="490" y="262"/><use href="#head" x="553" y="257"/>
                        <path d="M371.500 302V242M434.500 282V239M496.500 262V234M559.500 257V230M355 292.500h21M355 302.500h21" stroke="#000" stroke-width="1.200"/>
                        <path d="M371 240l189-12v5l-189 12z"/>
                        <!-- bar 13 treble -->
                        <use href="#head" x="365" y="407"/><circle cx="379" cy="407" r="2.200"/>
                        <use href="#head" x="438" y="432"/><use href="#head" x="462" y="427"/><use href="#head" x="486" y="427"/><use href="#rest8" x="519" y="432"/>
                        <use href="#head" x="555" y="427"/><use href="#head" x="579" y="422"/><use href="#head" x="603" y="417"/>
                        <path d="M359.500 407v34M431.500 432v36M456.500 427v38M480.500 427v34M549.500 427v33M573.500 422v36M597.500 417v40" stroke="#000" stroke-width="1.200"/>
                        <path d="M431 457l26-2v4l-26 2zM431 465l26-2v4l-26 2zM549 450l60-3v5l-60 3zM549 457l60-3v5l-60 3zM480 462q0-8 6-14q6-8 4-18q4 12-3 20z"/>
                        <path d="M462 420q12-11 24 0" fill="none" stroke="#000" stroke-width="1.500"/>
                        <g fill="#a9b4bd"><use href="#head" x="579" y="387"/><path d="M569 391h21v2h-21zM569 401h21v2h-21z"/></g>
                        <!-- bar 13 bass -->
                        <use href="#head" x="365" y="496"/><use href="#open" x="365" y="506"/><use href="#open" x="365" y="516"/><use href="#open" x="365" y="526"/>
                        <use href="#head" x="414" y="496"/><use href="#head" x="486" y="506"/>
                        <use href="#open" x="493" y="516"/><use href="#open" x="493" y="526"/><use href="#open" x="493" y="536"/>
                        <path d="M359.500 496v62M407.500 496v35M480.500 506v35M487.500 516v50M549.500 501v34M355 501.500h21M403 501.500h21M545 501.500h21" stroke="#000" stroke-width="1.200"/>
                        <use href="#head" x="555" y="501" fill="#ff8205"/>
                    </svg>
                </div>
                <div class="page next"></div>
                <div class="vscroll"><svg><use href="#i-up"/></svg></div>
            </div>
            <div class="hscroll"><span>‹</span><div></div></div>

            <section class="lower">
                <div class="lower-bar">
                    <div class="lower-tabs">
                        <button class="active" aria-label="Properties"><svg class="icon small"><use href="#i-list"/></svg></button>
                        <button aria-label="Keyboard"><svg class="icon"><use href="#i-piano"/></svg></button>
                        <button aria-label="Fretboard"><svg class="icon"><use href="#i-guitar"/></svg></button>
                        <button aria-label="Pads"><svg class="icon"><use href="#i-pads"/></svg></button>
                        <button aria-label="Lower mixer"><svg class="icon small"><use href="#i-mixer"/></svg></button>
                        <button aria-label="Key editor"><svg class="icon small"><use href="#i-roll"/></svg></button>
                    </div>
                    <input type="search" class="prop-search" placeholder="Search..." aria-label="Search properties">
                    <label class="show">Show: <select><option>All</option></select></label>
                </div>
                <div class="groups">
                    <section class="group">
                        <h3>Common</h3>
                        <div class="props">
                            <div class="prop"><label><input type="checkbox" class="toggle"><span>Suppress playback</span></label><div class="seg"><button>Always</button><button>On Passes</button></div></div>
                            <div class="prop two-line"><label><input type="checkbox" class="toggle"><span>Suppress on passes</span></label><input type="text" class="field long" aria-label="Passes"></div>
                            <div class="prop"><label><input type="checkbox" class="toggle"><span>Scale</span></label><select class="drop" aria-label="Scale"></select></div>
                            <div class="prop h28"><label><input type="checkbox" class="toggle"><span>Custom scale</span></label><input type="text" class="field" aria-label="Custom scale"></div>
                            <div class="prop"><label><input type="checkbox" class="toggle"><span>Color</span></label><input type="text" class="field low" aria-label="Color"></div>
                        </div>
                    </section>
                    <section class="group double">
                        <h3>Notes and Rests</h3>
                        <div class="columns">
                            <div class="props">
                                <div class="prop"><label><input type="checkbox" class="toggle"><span>Accidental</span></label><select class="drop" aria-label="Accidental"></select></div>
                                <div class="prop check"><label><input type="checkbox" class="toggle"></label><label><input type="checkbox" class="box"><span>Split stem</span></label></div>
                                <div class="prop check"><label><input type="checkbox" class="toggle"></label><label><input type="checkbox" class="box"><span>Trad. cancellation</span></label></div>
                                <div class="prop short"><label><input type="checkbox" class="toggle"><span>Starts voice</span></label></div>
                                <div class="prop"><label><input type="checkbox" class="toggle"><span>Ends voice</span></label><div class="seg"><button>Immediately</button><button>After barline</button></div></div>
                            </div>
                            <div class="props second">
                                <div class="prop h28"><label><input type="checkbox" class="toggle"><span>Velocity</span></label><input type="text" class="field" aria-label="Velocity"></div>
                                <div class="prop"><label><input type="checkbox" class="toggle"><span>Laissez vibrer tie</span></label></div>
                            </div>
                        </div>
                    </section>
                    <section class="group">
                        <h3></h3>
                        <div class="props second">
                            <div class="prop"><label><input type="checkbox" class="toggle"><span>Beam direction</span></label><select class="drop" aria-label="Beam direction"></select></div>
                            <div class="prop wide-label"><label><input type="checkbox" class="toggle"><span>Change fanned beam direction</span></label></div>
                        </div>
                    </section>
                    <section class="group">
                        <h3></h3>
                        <div class="props third"><div class="prop h28"><label></label><input type="text" class="field" aria-label="Value"></div></div>
                    </section>
                    <section class="group"><h3></h3></section>
                </div>
                <div class="lower-scroll"><div></div></div>
            </section>
        </main>

        <aside class="right-panel">
            <h3>Used In This Flow <svg><use href="#i-down"/></svg></h3>
            <div class="used"><span>74</span></div>
            <h3 class="next-head"></h3>
            <ul class="tempos">
                <li>Animato <span>144</span></li>
                <li>Appassionato <span>144</span></li>
                <li>Con bravura <span>144</span></li>
                <li>Energico <span>144</span></li>
                <li>Grandioso <span>144</span></li>
            </ul>
        </aside>
        <div class="right-scroll"><div></div></div>
        <aside class="right-tools">
            <div class="switch">
                <button class="active" aria-label="Palette"><svg class="icon big"><use href="#i-palette"/></svg></button>
                <button aria-label="Key entry"><svg class="icon big"><use href="#i-keyboard"/></svg></button>
            </div>
            <button aria-label="Clefs"><svg class="icon"><use href="#i-gclef"/></svg></button>
            <button aria-label="Key signatures"><svg class="icon"><use href="#i-keys"/></svg></button>
            <button class="timesig"><span>3</span><span>4</span></button>
            <button class="active tempo-tool"><svg><use href="#i-tempo"/></svg>=72</button>
            <button class="dyn">f</button>
            <button class="dyn trill">tr</button>
            <button aria-label="Playing lines"><svg class="icon small"><use href="#i-pedal"/></svg></button>
            <button aria-label="Bars"><svg class="icon small"><use href="#i-bars"/></svg></button>
            <button aria-label="Holds"><svg class="icon small"><use href="#i-fermata"/></svg></button>
            <button aria-label="Techniques"><svg class="icon small"><use href="#i-bow"/></svg></button>
            <button aria-label="Lines"><svg class="icon small"><use href="#i-line"/></svg></button>
            <button aria-label="Cues"><svg class="icon"><use href="#i-ear"/></svg></button>
            <button aria-label="Video cues"><svg class="icon small"><use href="#i-clap"/></svg></button>
            <button aria-label="Comments"><svg class="icon small"><use href="#i-comment"/></svg></button>
        </aside>
    </div>

    <footer class="status">
        <button class="plain note-btn" aria-label="Note value"><svg class="icon small"><use href="#n-8"/></svg><svg class="mini"><use href="#i-down"/></svg></button>
        <div class="pair"><button class="active">Concert Pitch</button><button>Transposed Pitch</button></div>
        <span class="bar">Bar 13</span>
        <span class="note-info">Note: C4 [60] (Down-stem Voice 2)</span>
        <div class="status-mid"><svg class="chev"><use href="#i-down"/></svg></div>
        <label class="follow"><input type="checkbox" class="toggle" checked> Follow playhead</label>
        <div class="pair icons"><button class="active" aria-label="Marquee"><svg class="icon small"><use href="#i-marquee"/></svg></button><button aria-label="Hand"><svg class="icon small"><use href="#i-hand"/></svg></button></div>
        <div class="pair views"><button class="active">Page view</button><button>Galley view</button></div>
        <div class="pair glyphs">
            <button class="active" aria-label="Spreads horizontally"><svg><use href="#i-spreads-h"/></svg></button>
            <button aria-label="Spreads vertically"><svg><use href="#i-spreads-v"/></svg></button>
            <button aria-label="Single pages horizontally"><svg><use href="#i-pages-h"/></svg></button>
            <button aria-label="Single pages vertically"><svg><use href="#i-pages-v"/></svg></button>
        </div>
        <div class="zoom">
            <button aria-label="Zoom"><svg class="mini"><use href="#i-search"/></svg></button>
            <div class="select"><select aria-label="Zoom level"><option>200%</option></select><svg><use href="#i-down"/></svg></div>
            <button>−</button><button>+</button>
        </div>
    </footer>

    <div class="dialog" role="dialog" aria-label="Notation Options">
        <div class="dialog-title">
            <svg class="logo"><use href="#i-logo"/></svg>
            <span>乾燥花 - Notation Options : 谱章 1</span>
            <div class="window-controls">
                <button aria-label="Minimize dialog" disabled><svg><use href="#i-min"/></svg></button>
                <button class="strong" aria-label="Maximize dialog"><svg><use href="#i-max"/></svg></button>
                <button aria-label="Close dialog" disabled><svg><use href="#i-close"/></svg></button>
            </div>
        </div>
        <div class="dialog-main">
            <nav class="categories">
                <input type="search" placeholder="Search categories..." aria-label="Search categories">
                <ul>
                    <li><a href="#">Accidentals</a></li>
                    <li><a href="#">Barlines</a></li>
                    <li><a href="#">Beam Grouping</a></li>
                    <li><a href="#">Clefs</a></li>
                    <li><a href="#">Condensing</a></li>
                    <li><a href="#">Fretted Instruments</a></li>
                    <li><a href="#">Key Signatures</a></li>
                    <li><a href="#">Note Grouping</a></li>
                    <li><a href="#">Percussion</a></li>
                    <li><a href="#">Rests</a></li>
                    <li><a href="#">Time Signatures</a></li>
                    <li><a href="#" class="active">Voices</a></li>
                    <li><a href="#" class="sub">Ordering Multiple Voices</a></li>
                    <li><a href="#" class="sub">Rhythmic Slash Voices</a></li>
                </ul>
            </nav>
            <section class="content">
                <h2>Ordering Multiple Voices</h2>
                <div class="viewport">
                    <fieldset class="card">
                        <legend>Interlocking pitches in opposing voices:</legend>
                        <div class="options">
                            <label class="option">
                                <input type="radio" name="interlocking" checked>
                                <svg width="223" height="102">
                                    <path d="M14 45.500H209M14 52.500H209M14 59.500H209M14 66.500H209M14 73.500H209" stroke="#333"/><path d="M208.500 45v29" stroke="#000"/>
                                    <use href="#sclef" x="19" y="66.500"/><text x="52" y="59">2</text><text x="52" y="73">4</text>
                                    <use href="#sopen" x="74.500" y="31.500"/><use href="#sopen" x="74.500" y="56"/>
                                    <path d="M79.500 12v44M67 31.500h15M67 38.500h15M108 38.500h15M81.500 42v45M110.500 38v49M143.500 42v46M176.500 45v43" stroke="#000"/>
                                    <path d="M81 85l96 2v3l-96-2z"/>
                                    <use href="#shead" x="86" y="42"/><use href="#shead" x="86" y="66.500"/><use href="#shead" x="115" y="38.500"/><use href="#shead" x="115" y="63"/><use href="#shead" x="148" y="42"/><use href="#shead" x="148" y="66.500"/><use href="#shead" x="180.500" y="45.500"/><use href="#shead" x="180.500" y="70"/>
                                </svg>
                                <span>Stem to stem</span>
                            </label>
                            <label class="option">
                                <input type="radio" name="interlocking">
                                <svg width="215" height="102">
                                    <path d="M14 45.500H201M14 52.500H201M14 59.500H201M14 66.500H201M14 73.500H201" stroke="#333"/><path d="M200.500 45v29" stroke="#000"/>
                                    <use href="#sclef" x="19" y="66.500"/><text x="52" y="59">2</text><text x="52" y="73">4</text>
                                    <use href="#sopen" x="77.500" y="31.500"/><use href="#sopen" x="77.500" y="56"/>
                                    <path d="M82.500 12v44M70 31.500h15M70 38.500h15M100 38.500h15M67.500 42v45M102.500 38v49M135.500 42v46M168.500 45v43" stroke="#000"/>
                                    <path d="M67 85l102 2v3l-102-2z"/>
                                    <use href="#shead" x="71.500" y="42"/><use href="#shead" x="71.500" y="66.500"/><use href="#shead" x="107" y="38.500"/><use href="#shead" x="107" y="63"/><use href="#shead" x="140" y="42"/><use href="#shead" x="140" y="66.500"/><use href="#shead" x="172.500" y="45.500"/><use href="#shead" x="172.500" y="70"/>
                                </svg>
                                <span>Notehead to notehead</span>
                            </label>
                        </div>
                    </fieldset>
                    <fieldset class="card">
                        <legend>Unisons in opposing voices:</legend>
                        <div class="options">
                            <label class="option">
                                <input type="radio" name="unisons" checked>
                                <svg width="224" height="91">
                                    <path d="M14 38.500H210M14 45.500H210M14 53.500H210M14 60.500H210M14 67.500H210" stroke="#333"/><path d="M209.500 38v30" stroke="#000"/>
                                    <use href="#sclef" x="19" y="60"/><text x="52" y="53">4</text><text x="52" y="67">4</text>
                                    <use href="#swhole" x="76.500" y="46"/><use href="#swhole" x="76.500" y="60.500"/>
                                    <path d="M93.500 13v33M113.500 13v29M134.500 13v33M155.500 13v36M178.500 19v30M102 31.500h15" stroke="#000"/>
                                    <path d="M93 12h63v3H93z"/>
                                    <use href="#shead" x="89" y="35.500"/><use href="#shead" x="89" y="46"/><use href="#shead" x="109" y="31.500"/><use href="#shead" x="109" y="42.500"/><use href="#shead" x="130" y="35.500"/><use href="#shead" x="130" y="46"/><use href="#shead" x="151" y="39"/><use href="#shead" x="151" y="49.500"/>
                                    <use href="#sopen" x="174" y="39"/><use href="#sopen" x="174" y="49.500"/>
                                    <path d="M157 37q5-4 11 0M157 49q5-4 11 0" fill="none" stroke="#000"/>
                                </svg>
                                <span>Prefer stemless notes to the left</span>
                            </label>
                            <label class="option">
                                <input type="radio" name="unisons">
                                <svg width="219" height="91">
                                    <path d="M14 38.500H204M14 45.500H204M14 53.500H204M14 60.500H204M14 67.500H204" stroke="#333"/><path d="M203.500 38v30" stroke="#000"/>
                                    <use href="#sclef" x="19" y="60"/><text x="52" y="53">4</text><text x="52" y="67">4</text>
                                    <use href="#swhole" x="87.500" y="46"/><use href="#swhole" x="87.500" y="60.500"/>
                                    <path d="M79.500 13v33M107.500 13v29M128.500 13v33M149.500 13v36M172.500 19v30M96 31.500h15" stroke="#000"/>
                                    <path d="M79 12h71v3H79z"/>
                                    <use href="#shead" x="74.500" y="35.500"/><use href="#shead" x="74.500" y="46"/><use href="#shead" x="103.500" y="31.500"/><use href="#shead" x="103.500" y="42.500"/><use href="#shead" x="124" y="35.500"/><use href="#shead" x="124" y="46"/><use href="#shead" x="145.500" y="39"/><use href="#shead" x="145.500" y="49.500"/>
                                    <use href="#sopen" x="168" y="39"/><use href="#sopen" x="168" y="49.500"/>
                                    <path d="M151 37q5-4 11 0M151 49q5-4 11 0" fill="none" stroke="#000"/>
                                </svg>
                                <span>Prefer higher notes to the left</span>
                            </label>
                        </div>
                    </fieldset>
                    <fieldset class="card">
                        <legend>Dotted and undotted unisons in opposing voices:</legend>
                        <div class="options">
                            <label class="option">
                                <input type="radio" name="dotted" checked>
                                <svg width="242" height="91">
                                    <path d="M14 35.500H227M14 42.500H227" stroke="#333"/><path d="M226.500 35v29M79.500 12v29M131.500 12v29" stroke="#000"/>
                                    <use href="#sclef" x="19" y="57"/><path d="M48 36h9l-2 6h-6z"/>
                                    <use href="#sopen" x="75" y="31.500"/><use href="#sopen" x="75" y="42"/><use href="#shead" x="86" y="42"/><use href="#shead" x="109" y="39"/><use href="#sopen" x="127" y="31.500"/><use href="#sopen" x="127" y="42"/><use href="#shead" x="146" y="42"/>
                                    <circle cx="136.500" cy="32" r="1.500"/><circle cx="136.500" cy="39" r="1.500"/>
                                </svg>
                            </label>
                            <label class="option">
                                <input type="radio" name="dotted">
                                <svg width="240" height="91">
                                    <path d="M14 35.500H225M14 42.500H225" stroke="#333"/><path d="M224.500 35v29M93.500 12v29M132.500 12v29" stroke="#000"/>
                                    <use href="#sclef" x="19" y="57"/><path d="M48 36h9l-2 6h-6z"/>
                                    <use href="#shead" x="72" y="42"/><use href="#sopen" x="89" y="31.500"/><use href="#sopen" x="89" y="42"/><use href="#shead" x="109" y="39"/><use href="#sopen" x="128" y="31.500"/><use href="#sopen" x="128" y="42"/><use href="#shead" x="146" y="42"/>
                                    <circle cx="137.500" cy="32" r="1.500"/><circle cx="137.500" cy="39" r="1.500"/>
                                </svg>
                            </label>
                            <label class="option">
                                <input type="radio" name="dotted">
                                <svg width="240" height="91">
                                    <path d="M14 35.500H214M14 42.500H214" stroke="#333"/><path d="M79.500 12v29M146.500 12v29" stroke="#000"/>
                                    <use href="#sclef" x="19" y="57"/><path d="M48 36h9l-2 6h-6z"/>
                                    <use href="#sopen" x="75" y="31.500"/><use href="#sopen" x="75" y="42"/><use href="#shead" x="86" y="42"/><use href="#shead" x="110" y="39"/><use href="#shead" x="130" y="42"/><use href="#sopen" x="142" y="31.500"/><use href="#sopen" x="142" y="42"/>
                                    <circle cx="151.500" cy="32" r="1.500"/><circle cx="151.500" cy="39" r="1.500"/>
                                </svg>
                            </label>
                        </div>
                    </fieldset>
                </div>
                <div class="content-hscroll"><div></div></div>
            </section>
            <div class="content-vscroll"><div></div></div>
            <aside class="flows">
                <h3>Flows</h3>
                <ul><li>谱章 1</li></ul>
                <button>Select All</button>
            </aside>
        </div>
        <div class="dialog-footer">
            <button class="default">Save As Default</button>
            <button>Reset to Saved Defaults</button>
            <button>Reset to Factory</button>
            <button>Remove Saved Defaults</button>
            <button class="close">Close</button>
            <button disabled>Apply</button>
        </div>
    </div>

    <div class="upload"><div><svg><use href="#i-cloud"/></svg></div><span>拖拽至此上传</span></div>
</body>
</html>
```

FILE: styles.css
```css
* {
    box-sizing: border-box;
}
body {
    margin: 0;
    height: 100vh;
    display: flex;
    flex-direction: column;
    overflow: hidden;
    position: relative;
    background: #131415;
    border-bottom: 2px solid #d9dbdf;
    color: #dfe3e8;
    font-family: "Open Sans", "Noto Sans CJK SC", sans-serif;
    font-size: 12px;
    line-height: 16px;
}
button, input, select {
    font: inherit;
    color: inherit;
    border: none;
    margin: 0;
    padding: 0;
    background: none;
}
button {
    display: flex;
    align-items: center;
    justify-content: center;
    white-space: nowrap;
}
select {
    appearance: none;
}
a {
    color: inherit;
    text-decoration: none;
}
ul {
    list-style: none;
    margin: 0;
    padding: 0;
}
h2, h3 {
    margin: 0;
    font-size: 12px;
    font-weight: 600;
}
svg {
    fill: currentColor;
    flex: none;
}
.sprite {
    position: absolute;
    width: 0;
    height: 0;
}
.icon {
    width: 24px;
    height: 24px;
}
.icon.small {
    width: 20px;
    height: 20px;
}
.icon.big {
    width: 26px;
    height: 26px;
}
.chev {
    width: 14px;
    height: 14px;
}
.mini {
    width: 12px;
    height: 12px;
}

/* title and menus */
.titlebar {
    display: flex;
    align-items: center;
    gap: 6px;
    height: 22px;
    padding-left: 2px;
    background: #fff;
    color: #8a8a8a;
}
.logo {
    width: 16px;
    height: 16px;
}
.window-controls {
    display: flex;
    margin-left: auto;
}
.window-controls button {
    width: 46px;
    height: 22px;
}
.window-controls svg {
    width: 12px;
    height: 12px;
}
.window-controls button:disabled {
    color: #c4c4c4;
}
.window-controls .strong {
    color: #000;
}
.menubar {
    display: flex;
    align-items: center;
    gap: 17px;
    height: 23px;
    padding-left: 8px;
    background: #fff;
    color: #9a9a9a;
}

/* main toolbar */
.toolbar {
    display: flex;
    align-items: center;
    height: 48px;
    padding: 0 7px 0 8px;
    background: #282c34;
}
.modes {
    display: flex;
    height: 33px;
    border-radius: 6px;
    background: #363f4a;
    font-size: 13px;
    font-weight: 600;
}
.modes button {
    padding: 2px 12px 0;
    border-radius: 6px;
}
.active {
    background: #285a84;
    color: #fff;
}
.select {
    position: relative;
    border-radius: 6px;
    background: #363f4a;
}
.select select {
    width: 100%;
    height: 100%;
    padding-left: 8px;
}
.select svg {
    position: absolute;
    right: 5px;
    top: 50%;
    width: 14px;
    height: 14px;
    margin-top: -7px;
    pointer-events: none;
}
.layout-select {
    width: 140px;
    height: 34px;
    margin-left: 12px;
}
.tab-buttons {
    display: flex;
    gap: 2px;
    margin-left: 12px;
}
.square {
    width: 36px;
    height: 28px;
    border-radius: 6px;
    background: #363f4a;
}
.transport {
    display: flex;
    align-items: center;
    margin-left: auto;
}
.cell {
    width: 34px;
    height: 34px;
}
.cell.wide {
    width: 36px;
}
.mixer {
    margin-left: 2px;
}
.dim {
    color: #7d838a;
}
.power {
    width: 32px;
    height: 32px;
    margin: 0 4px 0 28px;
    border-radius: 6px;
    background: #40a9ff;
    color: #16202a;
}
.position {
    width: 85px;
    height: 34px;
    margin-right: 2px;
    padding-right: 5px;
    border-radius: 6px;
    background: #131415;
    font-size: 12px;
    line-height: 34px;
    text-align: right;
}
.tempo {
    display: flex;
    align-items: center;
    gap: 4px;
    width: 63px;
    height: 34px;
    margin: 0 5px 0 2px;
    border-radius: 6px;
    background: #131415;
    overflow: hidden;
}
.tempo-note {
    width: 20px;
    height: 34px;
    background: #40a9ff;
    color: #000;
}
.tempo-arrows {
    width: 8px;
    height: 18px;
}
.tempo span {
    margin-left: 6px;
}

/* workspace */
.workspace {
    flex: 1;
    display: flex;
    min-height: 0;
    margin: 2px 0 1px;
}
.toolbox {
    width: 44px;
    margin-right: 2px;
    display: flex;
    flex-direction: column;
    gap: 2px;
}
.tools {
    display: flex;
    flex-direction: column;
    gap: 6px;
    padding: 3px 6px;
    background: #282c34;
}
.tools.grow {
    flex: 1;
}
.tools button {
    position: relative;
    width: 32px;
    height: 32px;
    border-radius: 5px;
}
.tools.tall {
    height: 44px;
    padding-top: 6px;
    margin-bottom: 1px;
}
.on {
    background: #40a9ff;
    color: #000;
}
.more::after {
    content: "";
    position: absolute;
    right: -4px;
    bottom: -3px;
    border: 3px solid transparent;
    border-right-color: #dfe3e8;
    border-bottom-color: #dfe3e8;
}
.tools .tuplet {
    font-size: 10px;
    font-weight: 700;
}
.notes-panel {
    width: 92px;
    margin-right: 2px;
    display: flex;
    flex-direction: column;
    gap: 2px;
}
.durations, .accidentals, .slur, .artic-left > div, .artic-right, .panel-rest {
    background: #1f2427;
}
.durations {
    display: grid;
    grid-template-columns: 38px 38px;
    column-gap: 2px;
    grid-template-rows: 20px 68px 60px 60px 64px 26px;
    padding-left: 2px;
}
.durations .wide {
    grid-column: span 2;
    width: 88px;
}
.durations .last {
    padding-top: 4px;
}
.durations button {
    border-radius: 5px;
}
.note {
    width: 30px;
    height: 40px;
}
.accidentals {
    display: flex;
    height: 49px;
    padding: 0 1px;
}
.accidentals button, .slur button {
    flex: 1;
}
.slur {
    display: flex;
    height: 49px;
}
.slur svg {
    width: 48px;
    height: 12px;
}
.artics {
    display: flex;
    gap: 2px;
    height: 162px;
}
.artic-left, .artic-right {
    flex: 1;
    display: flex;
    flex-direction: column;
    gap: 2px;
}
.artic-left > div {
    flex: 1;
}
.artic-right {
    gap: 0;
}
.artics button {
    width: 45px;
    height: 40px;
}
.panel-rest {
    flex: 1;
}
.center {
    flex: 1;
    min-width: 0;
    display: flex;
    flex-direction: column;
}
.canvas {
    flex: 1;
    min-height: 0;
    display: flex;
    align-items: flex-start;
    background: linear-gradient(#6cc5eb, #acd9de);
}
.page {
    flex: 1;
    height: calc(100% - 35px);
    margin-left: 60px;
    background: #fff;
    overflow: hidden;
}
.page.next {
    flex: none;
    width: 200px;
    margin-left: 40px;
    height: 100%;
}
.score {
    display: block;
    width: 100%;
    height: 640px;
    color: #000;
}
.ruler {
    fill: #8c98a3;
    font-size: 14px;
}
.barno {
    font: italic 18px "Liberation Serif", serif;
}
.vscroll {
    width: 16px;
    align-self: stretch;
    background: #f0f0f0;
    color: #555;
}
.vscroll svg {
    display: block;
    width: 10px;
    height: 18px;
    margin: 0 auto;
}
.hscroll {
    display: flex;
    height: 16px;
    background: #f0f0f0;
    color: #333;
}
.hscroll span {
    width: 25px;
    padding-left: 5px;
    font-size: 16px;
    line-height: 12px;
}
.hscroll div {
    flex: 1;
    background: #cdcdcd;
}

/* lower zone */
.lower {
    height: 266px;
    background: #131415;
    display: flex;
    flex-direction: column;
}
.lower-bar {
    display: flex;
    align-items: center;
    height: 40px;
    padding-left: 8px;
    background: #181b20;
}
.lower-tabs {
    display: flex;
    border-radius: 4px;
    background: #23282e;
}
.lower-tabs button {
    width: 37px;
    height: 28px;
    border-radius: 4px;
}
.prop-search {
    width: 120px;
    height: 26px;
    margin: 0 32px 0 30px;
    padding: 0 4px;
    border-radius: 5px;
    background: #2b323a;
}
::placeholder {
    color: #858c94;
    opacity: 1;
}
.show select {
    width: 90px;
    height: 28px;
    margin-left: 3px;
    padding-left: 6px;
    border-radius: 5px;
    background: #2b323a;
}
.groups {
    display: flex;
    gap: 4px;
    height: 216px;
    padding-top: 2px;
    overflow: hidden;
}
.group {
    flex: none;
    width: 281px;
    border-radius: 0 0 8px 8px;
    background: #1f2427;
    color: #8b9198;
}
.group.double {
    width: 575px;
}
.group h3 {
    height: 24px;
    padding: 0 7px;
    background: #2d333a;
    color: #dfe3e8;
    line-height: 22px;
}
.columns {
    display: flex;
}
.columns .props {
    width: 50%;
}
.columns .props:first-child {
    width: 322px;
    border-right: 1px solid #15181a;
}
.props {
    display: flex;
    flex-direction: column;
    gap: 8px;
    padding: 8px 0 0 10px;
    font-size: 11px;
}
.props.second {
    padding-top: 88px;
}
.props.third {
    padding-top: 72px;
}
.prop {
    display: flex;
    min-height: 20px;
}
.prop.two-line {
    height: 32px;
}
.prop.check, .prop.short {
    height: 21px;
}
.prop label {
    display: flex;
    gap: 4px;
    width: 132px;
    padding-right: 24px;
    white-space: nowrap;
}
.prop.two-line label {
    white-space: normal;
}
.prop.wide-label label {
    width: auto;
}
.prop.check label {
    width: auto;
    gap: 6px;
    padding-right: 8px;
}
.prop.check label span {
    padding-top: 3px;
}
.toggle {
    appearance: none;
    flex: none;
    width: 20px;
    height: 10px;
    margin-top: 6px;
    border-radius: 5px;
    background: #131415;
}
.toggle::before {
    content: "";
    display: block;
    width: 10px;
    height: 10px;
    border-radius: 5px;
    background: #48525e;
}
.toggle:checked::before {
    margin-left: 10px;
    background: #40a9ff;
}
.box {
    appearance: none;
    width: 16px;
    height: 16px;
    margin-top: 2px;
    border-radius: 3px;
    background: #272e37;
}
.seg {
    display: flex;
    height: 24px;
    border-radius: 4px;
    background: #272e37;
    font-weight: 600;
}
.seg button {
    padding: 0 9px;
}
.field {
    width: 58px;
    height: 26px;
    border: 2px solid #131415;
    border-radius: 5px;
}
.field.long {
    width: 132px;
}
.field.low {
    height: 20px;
}
.h28 .field {
    height: 28px;
}
.drop {
    width: 128px;
    height: 24px;
    border-radius: 5px;
    background: #272e37;
}
.lower-scroll {
    margin-top: 2px;
    height: 8px;
    background: #181b20;
}
.lower-scroll div {
    width: 54%;
    height: 8px;
    border-radius: 4px;
    background: #3f4b57;
}

/* right side */
.right-panel {
    display: flex;
    flex-direction: column;
    width: 218px;
    margin-left: 2px;
    background: #1f2427;
    overflow: hidden;
}
.right-panel h3 {
    display: flex;
    flex: none;
    align-items: center;
    justify-content: space-between;
    height: 40px;
    padding: 2px 9px 0;
    background: #2d333a;
    font-size: 13px;
}
.right-panel h3 svg {
    width: 14px;
    height: 14px;
}
.used {
    height: 38px;
    border-bottom: 4px solid #131415;
    padding: 8px 34px 0 0;
    text-align: right;
    color: #7d838a;
    font: 16px/20px "Liberation Serif", serif;
}
.tempos {
    height: 102px;
    margin-top: auto;
    font: bold 18px/24px "Liberation Serif", serif;
}
.tempos li {
    display: flex;
    justify-content: space-between;
    padding: 0 34px 0 9px;
}
.tempos span {
    color: #7d838a;
    font-size: 16px;
    font-weight: normal;
}
.right-scroll {
    width: 8px;
    margin: 0 2px;
    background: #181b20;
}
.right-scroll div {
    height: 40%;
    border-radius: 4px;
    background: #3f4b57;
}
.right-tools {
    width: 44px;
    padding: 4px 4px 0;
    background: #292d36;
}
.switch {
    border-radius: 7px;
    background: #131415;
    margin-bottom: 6px;
}
.switch button {
    width: 36px;
    height: 36px;
    border-radius: 7px;
}
.right-tools > button {
    width: 32px;
    height: 32px;
    margin: 0 2px 6px;
    border-radius: 4px;
}
.right-tools .timesig {
    flex-direction: column;
    font: bold 13px/11px "DejaVu Serif", serif;
}
.right-tools .tempo-tool {
    font-size: 8px;
    font-weight: 700;
}
.tempo-tool svg {
    width: 13px;
    height: 28px;
}
.right-tools .dyn {
    font: italic bold 22px/24px "Liberation Serif", serif;
}

/* status bar */
.status {
    display: flex;
    height: 25px;
    padding-top: 3px;
    background: #1f2427;
    line-height: 24px;
}
.status button {
    height: 22px;
}
.note-btn {
    width: 50px;
    gap: 4px;
}
.pair {
    display: flex;
    height: 22px;
    border-radius: 4px;
    background: #363f4a;
    font-size: 11px;
    font-weight: 600;
}
.pair button {
    padding: 0 9px;
    border-radius: 4px;
}
.bar {
    width: 86px;
    margin-left: 11px;
}
.note-info {
    padding-right: 6px;
    border-right: 2px solid #131415;
}
.status-mid {
    flex: 1;
    display: flex;
    align-items: center;
    justify-content: center;
    border-right: 2px solid #131415;
}
.follow {
    display: flex;
    gap: 18px;
    padding: 0 8px 0 5px;
}
.pair.icons button {
    width: 32px;
}
.pair.views {
    margin: 0 7px;
}
.pair.glyphs button {
    width: 30px;
    padding: 0;
}
.glyphs svg {
    width: 24px;
    height: 20px;
}
.zoom {
    display: flex;
    gap: 2px;
    height: 22px;
    margin: 0 37px 0 7px;
}
.zoom button {
    width: 23px;
    border-radius: 4px;
    background: #363f4a;
    font-size: 18px;
}
.zoom .select {
    width: 79px;
}
.zoom .select svg {
    width: 10px;
}

/* notation options dialog */
.dialog {
    position: absolute;
    left: 600px;
    top: 177px;
    right: 40px;
    bottom: 132px;
    display: flex;
    flex-direction: column;
    background: #131415;
    box-shadow: 0 0 0 1px #3a3d40, 0 3px 18px rgba(0, 0, 0, 0.5);
}
.dialog-title {
    display: flex;
    align-items: center;
    gap: 6px;
    height: 30px;
    padding-left: 8px;
    background: #fff;
    color: #000;
}
.dialog-main {
    flex: 1;
    display: flex;
    min-height: 0;
    padding: 2px 2px 0;
}
.categories {
    width: 190px;
    margin-right: 2px;
}
.categories input {
    display: block;
    width: 100%;
    height: 32px;
    padding: 2px 6px 0;
    background: #282f38;
}
.categories ul {
    display: flex;
    flex-direction: column;
    gap: 2px;
    padding: 6px 4px;
}
.categories a {
    display: block;
    height: 24px;
    padding-left: 5px;
    border-radius: 3px;
    background: #1f2427;
    line-height: 26px;
}
.categories .active {
    background: #285a84;
}
.categories .sub {
    padding-left: 16px;
    background: #181b20;
    line-height: 24px;
}
.content {
    flex: 1;
    min-width: 0;
    display: flex;
    flex-direction: column;
    background: #1f2427;
}
.content h2 {
    height: 40px;
    padding-left: 11px;
    border-radius: 4px 0 0 0;
    background: #2d333a;
    font-size: 15px;
    font-weight: 400;
    line-height: 42px;
}
.viewport {
    flex: 1;
    min-height: 0;
    padding: 36px 0 0 32px;
    overflow: hidden;
}
.card {
    width: max-content;
    margin: 0 0 24px;
    padding: 19px 22px;
    border: none;
    border-radius: 12px;
    background: #181b20;
}
.card legend {
    float: left;
    width: 100%;
    padding: 0;
    margin-bottom: 33px;
    font-size: 13px;
    font-weight: 600;
    line-height: 20px;
}
.options {
    clear: both;
    display: flex;
    gap: 36px;
}
.option {
    position: relative;
    display: flex;
    flex-direction: column;
    align-items: center;
    gap: 9px;
    font-size: 13px;
    line-height: 20px;
}
.option input {
    position: absolute;
    opacity: 0;
}
.option svg {
    border-radius: 6px;
    background: #eee;
    color: #000;
}
.option input:checked + svg {
    background: #fff;
    box-shadow: 0 0 0 6px #40a9ff;
}
.option text {
    font: bold 19px "DejaVu Serif", serif;
    text-anchor: middle;
}
.content-hscroll {
    height: 14px;
    padding-top: 1px;
    background: #181b20;
}
.content-hscroll div {
    width: 96%;
    height: 11px;
    border-radius: 4px;
    background: #3f4b57;
}
.content-vscroll {
    width: 14px;
    padding: 0 2px;
    background: #181b20;
}
.content-vscroll div {
    height: 249px;
    border-radius: 4px;
    background: #3f4b57;
}
.flows {
    display: flex;
    flex-direction: column;
    width: 240px;
    background: #1f2427;
}
.flows h3 {
    height: 34px;
    padding-left: 15px;
    background: #2d333a;
    line-height: 38px;
}
.flows ul {
    flex: 1;
    padding: 2px;
}
.flows li {
    height: 32px;
    padding-left: 11px;
    background: #40a9ff;
    color: #1d4a73;
    line-height: 34px;
}
.flows button {
    width: 71px;
    height: 26px;
    margin: 0 2px 5px;
    border-radius: 4px;
    background: #282c34;
    font-weight: 600;
}
.dialog-footer {
    display: flex;
    align-items: center;
    gap: 6px;
    height: 52px;
    padding: 0 12px 0 11px;
    border-bottom: 2px solid #131415;
    background: #181b20;
    font-size: 13px;
    font-weight: 600;
}
.dialog-footer button {
    height: 34px;
    padding: 0 13px;
    border-radius: 6px;
    background: #363f4a;
}
.dialog-footer .default {
    padding: 0 11px;
    border: 2px solid #2a70ab;
}
.dialog-footer .close {
    margin-left: auto;
    padding: 0 19px;
}
.dialog-footer button:disabled {
    padding: 0 18px;
    border: 2px solid #131415;
    background: none;
    color: #7d838a;
}

/* drop target floating over the window */
.upload {
    position: absolute;
    top: 112px;
    right: 170px;
    display: flex;
    align-items: center;
    width: 130px;
    height: 38px;
    border: 1px solid #2e96ff;
    border-radius: 8px;
    background: #eff8ff;
    color: #2ea3fb;
    font-size: 13px;
    font-weight: 700;
    overflow: hidden;
}
.upload div {
    display: flex;
    align-items: center;
    justify-content: center;
    width: 36px;
    height: 38px;
    margin-right: 7px;
    border-radius: 7px;
    background: linear-gradient(45deg, #41b6ff, #1f8ff8);
}
.upload svg {
    width: 22px;
    height: 22px;
}
```
